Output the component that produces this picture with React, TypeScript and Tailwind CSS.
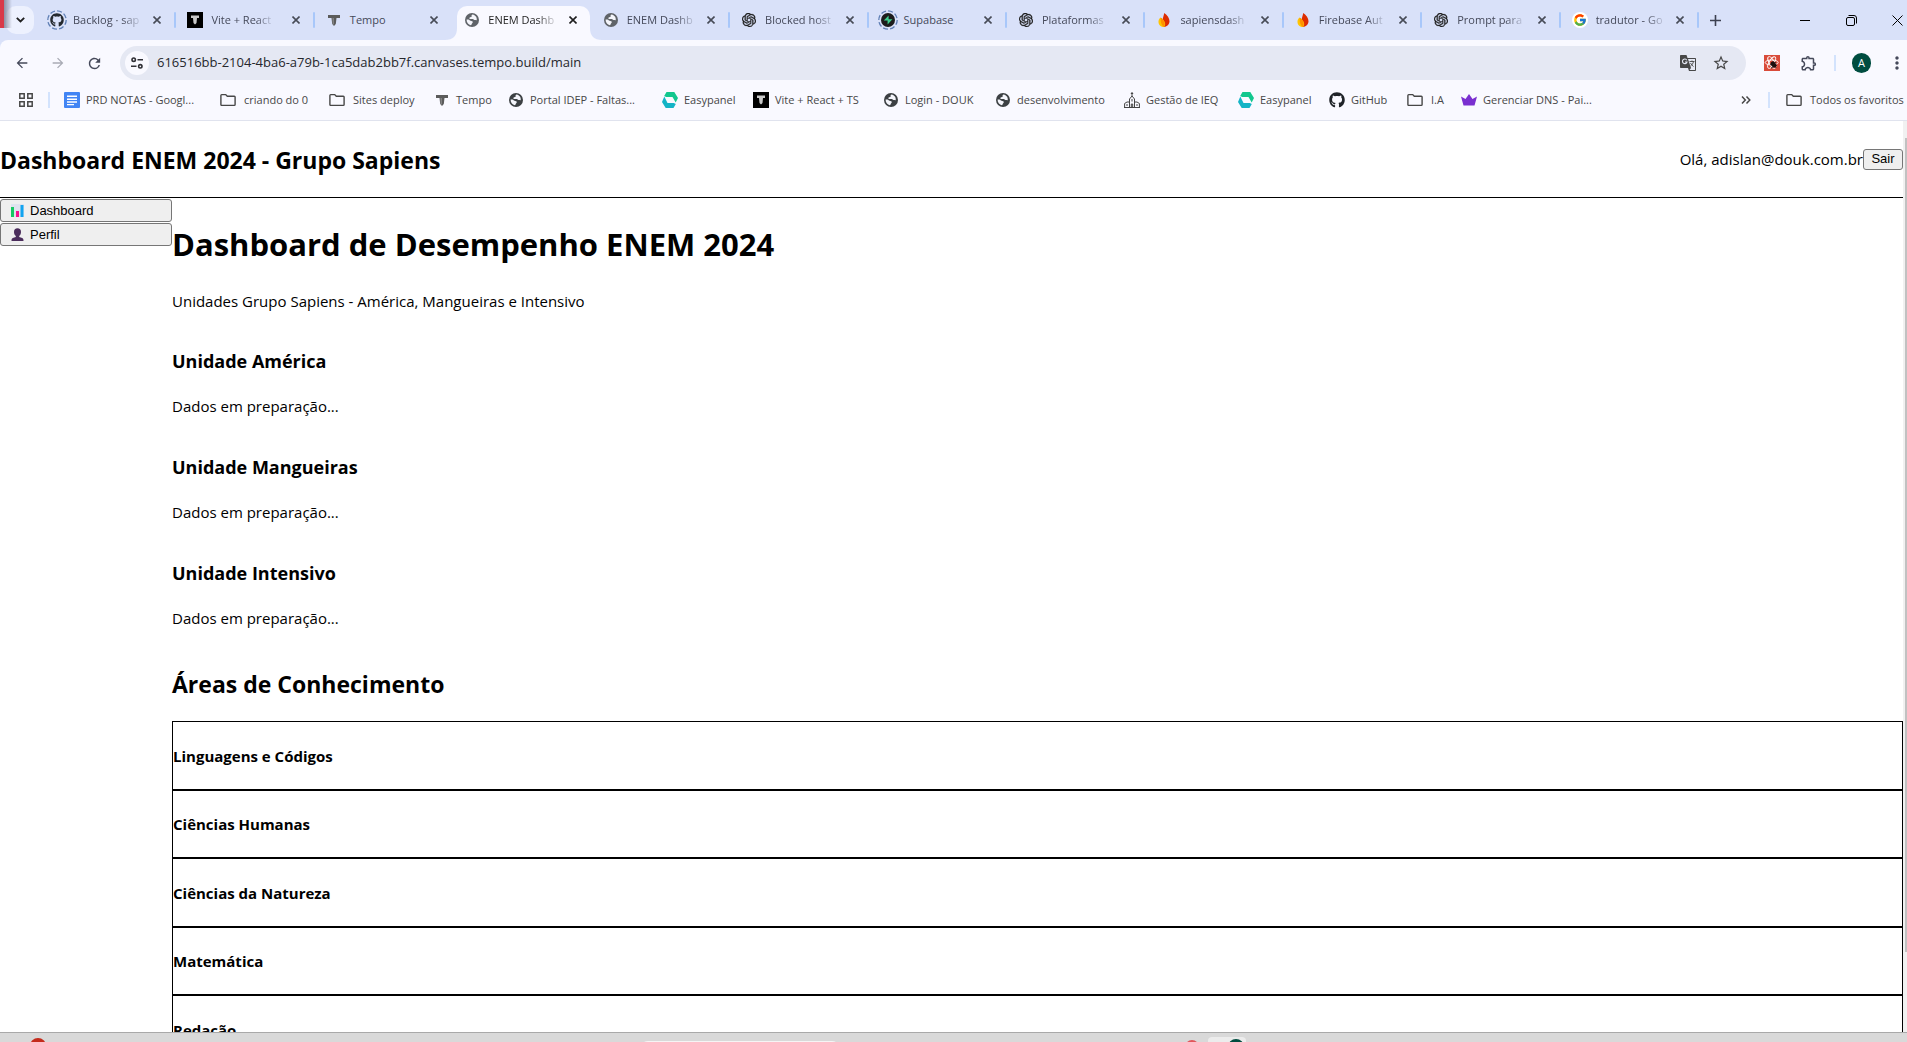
import React from "react";
import { FaGithub } from "react-icons/fa";
import { FcGoogle } from "react-icons/fc";
import { SiOpenai } from "react-icons/si";
import { MdArrowBack, MdArrowForward, MdRefresh, MdStarBorder, MdMoreVert, MdOutlineExtension } from "react-icons/md";

function Globe({ color = "#5f6368" }: { color?: string }) {
  return (
    <svg width="16" height="16" viewBox="0 0 16 16" aria-hidden="true">
      <circle cx="8" cy="8" r="7" fill={color} />
      <path
        d="M8.600 2.600c-.9.200-1.200 1-1 1.700.1.700-.6.900-1.300.9-.8.100-1.200.7-.9 1.400.3.600 1 .5 1.800.5h1.600c.8.100 1 .8 1.600.9.700.1 1.300.1 2.300.2.500-2.600-1.300-4.900-4.100-5.600z"
        fill="#f4f5fb"
      />
      <path d="M2.600 7.600c1.300 0 2.300 0 3.300.8.800.6 2.100.3 2.700 1 .5.700 0 1.500-.6 2-.5.500-.4 1.300-1.100 1.900-2.600-.5-4.500-2.800-4.300-5.700z" fill="#f4f5fb" />
    </svg>
  );
}

function TempoMark() {
  return (
    <svg width="16" height="16" viewBox="0 0 16 16" aria-hidden="true">
      <path d="M2 3h12v3h-3.500L9.800 12 8 14l-1.800-2L5.500 6H2z" fill="#5b5b5b" />
      <path d="M6.500 6h1.300v7L6.700 11.600z" fill="#8a8a8a" />
    </svg>
  );
}

function ViteTile() {
  return (
    <svg width="16" height="16" viewBox="0 0 16 16" aria-hidden="true">
      <rect width="16" height="16" fill="#000" />
      <path d="M4 3.500h8v2.500h-2L9.500 11 8 12.500 6.500 11 6 6H4z" fill="#c9c9c9" />
    </svg>
  );
}

function Ringed({ children }: { children: React.ReactNode }) {
  return (
    <span className="relative flex size-4 items-center justify-center">
      <svg className="absolute -top-0.5 -left-0.5" width="20" height="20" viewBox="0 0 20 20" aria-hidden="true">
        <circle cx="10" cy="10" r="9.200" fill="none" stroke="#5f7fb5" strokeWidth="1.300" strokeDasharray="5 2.200" />
      </svg>
      {children}
    </span>
  );
}

function Supabase() {
  return (
    <svg className="relative" width="14" height="14" viewBox="0 0 14 14" aria-hidden="true">
      <circle cx="7" cy="7" r="7" fill="#1c1c1c" />
      <path d="M7.600 2.500 2.800 7.600h3.800v3.800l4.800-5.100H7.600z" fill="#3ecf8e" />
    </svg>
  );
}

function Firebase() {
  return (
    <svg width="16" height="16" viewBox="0 0 16 16" aria-hidden="true">
      <path d="M8.300 1c3 2.300 5.200 5 5.200 8.300 0 3-2.200 5.400-5.300 5.700-1.500-2-2-4-1.700-6C6.700 6.500 7.500 4 8.300 1z" fill="#dd2c00" />
      <path d="M4.300 5.500C3 7 2.300 8.500 2.500 10.200 2.700 13 5 15 8.200 15c2-2.500 1.200-6.500-3.900-9.500z" fill="#ffc400" />
      <path d="M4.800 5.800C7.600 7.200 9.700 10.500 8.200 15c-2.400-1-3.900-4.500-3.400-9.200z" fill="#ff9100" />
    </svg>
  );
}

function GoogleDisc() {
  return (
    <span className="flex size-4 items-center justify-center rounded-full bg-white">
      <FcGoogle size={14} />
    </span>
  );
}

function Docs() {
  return (
    <svg width="16" height="16" viewBox="0 0 16 16" aria-hidden="true">
      <rect width="16" height="16" rx="1" fill="#4285f4" />
      <path d="M3 3.500h10v1.500H3zM3 6.500h10V8H3zM3 9.300h10v1.500H3zM3 12h7v1.300H3z" fill="#fff" />
    </svg>
  );
}

function Folder() {
  return (
    <svg width="16" height="16" viewBox="0 0 16 16" fill="none" stroke="#474747" strokeWidth="1.400" aria-hidden="true">
      <path d="M.9 3.400c0-.5.300-.8.800-.8h4l1.600 1.700h7c.5 0 .8.300.8.800v7.500c0 .5-.3.800-.8.800H1.700c-.5 0-.8-.3-.8-.8z" />
    </svg>
  );
}

function Easypanel() {
  return (
    <svg width="16" height="16" viewBox="0 0 16 16" aria-hidden="true">
      <path d="M4.500 0h7.800L16 6l-2.300 4.500L10.500 5H4.200L2.200 4z" fill="#12c78e" />
      <path d="M11.500 16H3.700L0 10l2.300-5.500L5.500 11h6.300l2 1z" fill="#14b4c6" />
    </svg>
  );
}

function Church() {
  return (
    <svg width="16" height="16" viewBox="0 0 16 16" fill="none" stroke="#444" strokeWidth="1" aria-hidden="true">
      <path d="M8 0v4M6.800 1.500h2.400M5.500 15.500V7L8 4l2.500 3v8.500M.6 15.500v-4L3 10h2.500M15.400 15.500v-4L13 10h-2.500M0 15.500h16M3 12v2M13 12v2M7.300 15v-3h1.400v3M8 7v2.500" />
    </svg>
  );
}

function Crown() {
  return (
    <svg width="16" height="16" viewBox="0 0 16 16" aria-hidden="true">
      <path d="M0 4.500 4.500 7 8 2l3.500 5L16 4.500 13.500 13.500h-11z" fill="#7a2fd0" />
    </svg>
  );
}

function Translate() {
  return (
    <svg width="16" height="16" viewBox="0 0 16 16" fill="none" aria-hidden="true">
      <path d="M1 0h5.500l1 3H15c.6 0 1 .4 1 1v11c0 .6-.4 1-1 1H9l-1-3H1c-.6 0-1-.4-1-1V1c0-.6.400-1 1-1z" fill="#474747" />
      <path d="M8 4h7v11H9.500l1.500-2z" fill="#e5e8f3" />
      <path d="M6.800 5.200A2.300 2.300 0 1 0 7 7H5" stroke="#e5e8f3" strokeWidth="1.100" />
      <path d="M9.500 6.500h5M12 5.500v1M13.500 6.500c-.4 2-1.500 3.500-3 4.500M10.500 8c.7 1.500 1.700 2.500 3 3.500" stroke="#474747" strokeWidth=".9" />
    </svg>
  );
}

function ReactExtension() {
  return (
    <svg width="16" height="16" viewBox="0 0 16 16" fill="none" aria-hidden="true">
      <rect width="16" height="16" fill="#d94b3a" />
      <g stroke="#fff" strokeWidth=".9">
        <ellipse cx="7.700" cy="7.500" rx="6.500" ry="2.500" />
        <ellipse cx="7.700" cy="7.500" rx="6.500" ry="2.500" transform="rotate(60 7.700 7.500)" />
        <ellipse cx="7.700" cy="7.500" rx="6.500" ry="2.500" transform="rotate(120 7.700 7.500)" />
      </g>
      <ellipse cx="9.500" cy="9.500" rx="2.300" ry="3.300" transform="rotate(-40 9.500 9.500)" fill="#1c0f0d" />
      <path d="M6 10l6-3M7 13l6-3M9 6l3 7" stroke="#1c0f0d" strokeWidth=".9" />
    </svg>
  );
}

function SiteSettings() {
  return (
    <svg width="14" height="14" viewBox="0 0 14 14" fill="none" stroke="#303036" strokeWidth="1.600" aria-hidden="true">
      <circle cx="3.700" cy="3.700" r="1.700" />
      <path d="M7.500 3.700H13M1 10.300h5.500" />
      <circle cx="10.300" cy="10.300" r="1.700" />
    </svg>
  );
}

function AppsGrid() {
  return (
    <svg width="14" height="14" viewBox="0 0 14 14" fill="none" stroke="#474747" strokeWidth="1.500" aria-hidden="true">
      <path d="M.8.800h4.400v4.400H.8zM8.800.8h4.400v4.400H8.800zM.8 8.800h4.400v4.400H.8zM8.800 8.800h4.400v4.400H8.800z" />
    </svg>
  );
}

function Cross({ color = "#474b57" }: { color?: string }) {
  return (
    <svg width="8" height="8" viewBox="0 0 8 8" stroke={color} strokeWidth="1.600" aria-hidden="true">
      <path d="M.5.500l7 7M7.500.5l-7 7" />
    </svg>
  );
}

function BarChart() {
  return (
    <svg width="13" height="13" viewBox="0 0 13 13" aria-hidden="true">
      <rect width="13" height="13" fill="#dfe3ee" />
      <rect y="3" width="3" height="10" fill="#17c964" />
      <rect x="5" y="7" width="3" height="6" fill="#f5128e" />
      <rect x="9.500" y="1" width="3" height="12" fill="#11a4f0" />
    </svg>
  );
}

function Bust() {
  return (
    <svg width="13" height="13" viewBox="0 0 13 13" fill="#4b2d5c" aria-hidden="true">
      <path d="M6.500.3c2.200 0 3.500 1.400 3.500 3.600 0 1.800-.8 3.200-1.800 4v1l3 1.200c1 .4 1.300 1.300 1.300 2.900H.5c0-1.600.3-2.500 1.300-2.900l3-1.200v-1C3.800 7.100 3 5.700 3 3.900 3 1.700 4.300.3 6.500.3z" />
    </svg>
  );
}

const openAi = <SiOpenai size={14} color="#1f1f1f" stroke="#1f1f1f" strokeWidth={0.6} />;

const tabs = [
  { title: "Backlog · sap", icon: <Ringed><FaGithub size={14} color="#24292f" className="relative" /></Ringed>, divider: true },
  { title: "Vite + React", icon: <ViteTile />, divider: true },
  { title: "Tempo", icon: <TempoMark /> },
  { title: "ENEM Dashb", icon: <Globe />, active: true },
  { title: "ENEM Dashb", icon: <Globe />, divider: true },
  { title: "Blocked host", icon: openAi, divider: true },
  { title: "Supabase", icon: <Ringed><Supabase /></Ringed>, divider: true },
  { title: "Plataformas", icon: openAi, divider: true },
  { title: "sapiensdash", icon: <Firebase />, divider: true },
  { title: "Firebase Aut", icon: <Firebase />, divider: true },
  { title: "Prompt para", icon: openAi, divider: true },
  { title: "tradutor - Go", icon: <GoogleDisc />, divider: true },
];

const bookmarks = [
  { label: "PRD NOTAS - Googl...", icon: <Docs />, width: "w-[156px]", gap: "gap-1.5" },
  { label: "criando do 0", icon: <Folder />, width: "w-[109px]", gap: "gap-2" },
  { label: "Sites deploy", icon: <Folder />, width: "w-[105px]", gap: "gap-2" },
  { label: "Tempo", icon: <TempoMark />, width: "w-[74px]", gap: "gap-1.5" },
  { label: "Portal IDEP - Faltas...", icon: <Globe color="#3c4043" />, width: "w-[154px]", gap: "gap-1.5" },
  { label: "Easypanel", icon: <Easypanel />, width: "w-[91px]", gap: "gap-1.5" },
  { label: "Vite + React + TS", icon: <ViteTile />, width: "w-[130px]", gap: "gap-1.5" },
  { label: "Login - DOUK", icon: <Globe color="#3c4043" />, width: "w-[112px]", gap: "gap-1.5" },
  { label: "desenvolvimento", icon: <Globe color="#3c4043" />, width: "w-[129px]", gap: "gap-1.5" },
  { label: "Gestão de IEQ", icon: <Church />, width: "w-[114px]", gap: "gap-1.5" },
  { label: "Easypanel", icon: <Easypanel />, width: "w-[91px]", gap: "gap-1.5" },
  { label: "GitHub", icon: <FaGithub size={16} color="#1f2328" />, width: "w-[78px]", gap: "gap-1.5" },
  { label: "I.A", icon: <Folder />, width: "w-[54px]", gap: "gap-2" },
  { label: "Gerenciar DNS - Pai...", icon: <Crown />, width: "w-[140px]", gap: "gap-1.5" },
];

function Tab({ title, icon, active, divider }: { title: string; icon: React.ReactNode; active?: boolean; divider?: boolean }) {
  return (
    <div className="relative flex h-full min-w-0 flex-1 items-center pl-[11px]">
      {active && (
        <svg className="absolute bottom-0 -left-2 h-[34px] w-[calc(100%+20px)]" aria-hidden="true">
          <rect x="12" width="133" height="34" rx="10" fill="#f9f9ff" />
          <path d="M0 34c8 0 12-4 12-12h133c0 8 4 12 12 12z" fill="#f9f9ff" />
        </svg>
      )}
      <button className="relative flex min-w-0 flex-1 items-center gap-2">
        <span className="flex size-4 shrink-0 items-center justify-center">{icon}</span>
        <span
          className={`min-w-0 pr-1 text-left text-[11px] leading-4 whitespace-nowrap ${
            title.length > 9 ? "[mask-image:linear-gradient(to_right,#000_70%,transparent)]" : ""
          } ${active ? "text-[#1f1f1f]" : "text-[#45495a]"}`}
        >
          {title}
        </span>
      </button>
      <button aria-label={`Fechar ${title}`} className="relative mr-[11px] flex size-4 shrink-0 items-center justify-center">
        <Cross color={active ? "#1f1f1f" : undefined} />
      </button>
      {divider && <span className="absolute top-3 right-0 h-4 w-0.5 rounded-full bg-[#a8c7fa]" />}
    </div>
  );
}

function TabStrip() {
  return (
    <div className="flex h-10 shrink-0 bg-[#d9e1f9]">
      <div className="relative w-[38px] shrink-0">
        <button aria-label="Pesquisar guias" className="absolute top-1.5 left-1.5 flex size-7 items-center justify-center rounded-[10px] bg-[#edf1fe]">
          <svg width="9" height="6" viewBox="0 0 9 6" fill="none" stroke="#1f1f1f" strokeWidth="1.800" aria-hidden="true">
            <path d="M.8.800l3.700 3.700L8.200.8" />
          </svg>
        </button>
        <span className="absolute top-0 left-0 h-7 w-1 bg-[#d93a49]" />
        <span className="absolute top-0 left-1 h-7 w-2 bg-linear-to-r from-[#8f93a5] to-transparent" />
      </div>
      <div className="flex min-w-0 flex-1">
        {tabs.map((tab, i) => (
          <Tab key={i} {...tab} />
        ))}
      </div>
      <div className="flex w-52 shrink-0 items-center pl-2.5">
        <button aria-label="Nova guia" className="flex size-3 items-center justify-center">
          <svg width="11" height="11" viewBox="0 0 11 11" stroke="#3c4050" strokeWidth="1.600" aria-hidden="true">
            <path d="M5.500 0v11M0 5.500h11" />
          </svg>
        </button>
        <div className="flex flex-1 items-center justify-end gap-[35px] pr-1">
          <button aria-label="Minimizar">
            <svg width="11" height="11" viewBox="0 0 11 11" stroke="#000" aria-hidden="true"><path d="M0 5.500h10" /></svg>
          </button>
          <button aria-label="Restaurar">
            <svg width="11" height="11" viewBox="0 0 11 11" fill="none" stroke="#000" aria-hidden="true">
              <rect x=".5" y="2.500" width="8" height="8" rx="1.500" />
              <path d="M2.500.5h5.500a2.500 2.500 0 0 1 2.500 2.500v5.500" />
            </svg>
          </button>
          <button aria-label="Fechar">
            <svg width="11" height="11" viewBox="0 0 11 11" stroke="#000" aria-hidden="true"><path d="M.5.500l10 10M10.500.5l-10 10" /></svg>
          </button>
        </div>
      </div>
    </div>
  );
}

function AddressRow() {
  return (
    <div className="shrink-0 bg-[#d9e1f9]">
      <div className="flex h-10 items-end rounded-tl-lg bg-[#f9f9ff]">
        <div className="flex h-[34px] w-[120px] shrink-0 items-center gap-5 pl-3.5 text-[#45495a]">
          <button aria-label="Voltar"><MdArrowBack size={16} /></button>
          <button aria-label="Avançar" className="text-[#a9abb5]"><MdArrowForward size={16} /></button>
          <button aria-label="Recarregar"><MdRefresh size={17} /></button>
        </div>
        <div className="flex h-[34px] min-w-0 flex-1 items-center rounded-full bg-[#e5e8f3] pr-4 pl-[5px]">
          <button aria-label="Informações do site" className="flex size-6 shrink-0 items-center justify-center rounded-full bg-[#f9f9ff]">
            <SiteSettings />
          </button>
          <input
            aria-label="Endereço"
            defaultValue="616516bb-2104-4ba6-a79b-1ca5dab2bb7f.canvases.tempo.build/main"
            className="ml-2 min-w-0 flex-1 bg-transparent text-[13px] text-[#26272c] outline-none"
          />
          <button aria-label="Traduzir"><Translate /></button>
          <button aria-label="Favoritar" className="ml-4 text-[#474747]"><MdStarBorder size={18} /></button>
        </div>
        <div className="flex h-[34px] w-[161px] shrink-0 items-center pl-[18px]">
          <button aria-label="React"><ReactExtension /></button>
          <button aria-label="Extensões" className="ml-5 text-[#45495a]"><MdOutlineExtension size={18} /></button>
          <span className="ml-4 h-4 w-0.5 bg-[#d3e3fd]" />
          <button aria-label="Perfil do navegador" className="ml-4 flex size-5 items-center justify-center rounded-full bg-[#004d40] text-[11px] text-white">A</button>
          <button aria-label="Menu" className="ml-4 text-[#45495a]"><MdMoreVert size={20} /></button>
        </div>
      </div>
    </div>
  );
}

function BookmarkBar() {
  return (
    <nav aria-label="Favoritos" className="flex h-[41px] shrink-0 items-center overflow-hidden border-b border-[#e0e3ee] text-[11px] whitespace-nowrap text-[#474747]">
      <button aria-label="Aplicativos" className="ml-[19px] shrink-0"><AppsGrid /></button>
      <span className="mr-3.5 ml-[15px] h-4 w-0.5 shrink-0 bg-[#d3e3fd]" />
      {bookmarks.map((b, i) => (
        <a key={i} href="#" className={`flex shrink-0 items-center ${b.width} ${b.gap}`}>
          <span className="flex size-4 shrink-0 items-center justify-center">{b.icon}</span>
          {b.label}
        </a>
      ))}
      <button aria-label="Mais favoritos" className="ml-auto shrink-0">
        <svg width="10" height="8" viewBox="0 0 10 8" fill="none" stroke="#474747" strokeWidth="1.500" aria-hidden="true">
          <path d="M1 .6 4.300 4 1 7.400M5.500.6 8.800 4 5.500 7.400" />
        </svg>
      </button>
      <span className="mr-4 ml-[17px] h-4 w-0.5 shrink-0 bg-[#d3e3fd]" />
      <a href="#" className="flex w-[121px] shrink-0 items-center gap-2"><Folder />Todos os favoritos</a>
    </nav>
  );
}

const nativeButton = "rounded-[3px] border border-[#767676] bg-[#efefef] font-['Liberation_Sans',Arial,sans-serif] text-[13px] text-black";
const units = ["Unidade América", "Unidade Mangueiras", "Unidade Intensivo"];
const areas = ["Linguagens e Códigos", "Ciências Humanas", "Ciências da Natureza", "Matemática", "Redação"];

function Page() {
  return (
    <div className="flex min-h-0 flex-1 overflow-hidden bg-white text-[15px] leading-5 text-black">
      <div className="min-w-0 flex-1">
        <header className="flex h-[77px] items-center justify-between border-b border-black">
          <h2 className="pt-0.5 text-[23px] leading-8 font-bold">Dashboard ENEM 2024 - Grupo Sapiens</h2>
          <div className="flex items-start">
            <span>Olá, adislan@douk.com.br</span>
            <button className={`h-[21px] w-10 leading-4 ${nativeButton}`}>Sair</button>
          </div>
        </header>
        <div className="flex">
          <nav aria-label="Principal" className="w-43 shrink-0">
            <ul>
              <li className="pt-px">
                <button className={`flex h-[23px] w-full items-center gap-1.5 pl-2.5 ${nativeButton}`}><BarChart />Dashboard</button>
              </li>
              <li className="pt-px">
                <button className={`flex h-[23px] w-full items-center gap-1.5 pl-2.5 ${nativeButton}`}><Bust />Perfil</button>
              </li>
            </ul>
          </nav>
          <main className="min-w-0 flex-1">
            <h1 className="mt-6 text-[31px] leading-11 font-bold">Dashboard de Desempenho ENEM 2024</h1>
            <p className="mt-[25px]">Unidades Grupo Sapiens - América, Mangueiras e Intensivo</p>
            <div className="mt-[38px] flex flex-col gap-[39px]">
              {units.map((u) => (
                <section key={u}>
                  <h3 className="text-[18px] leading-6 font-bold">{u}</h3>
                  <p className="mt-[23px]">Dados em preparação...</p>
                </section>
              ))}
            </div>
            <h2 className="mt-10 text-[23px] leading-8 font-bold">Áreas de Conhecimento</h2>
            <div className="mt-[21px]">
              {areas.map((a) => (
                <div key={a} className="flex h-[69px] items-center border border-black even:h-[68px]">
                  <h4 className="font-bold">{a}</h4>
                </div>
              ))}
            </div>
          </main>
        </div>
      </div>
      <div className="w-1 shrink-0 bg-[#f1f1f1] pt-[17px] pl-0.5" aria-hidden="true">
        <div className="h-[91%] bg-[#c1c1c1]" />
      </div>
    </div>
  );
}

function Taskbar() {
  return (
    <div className="relative h-2.5 shrink-0 overflow-hidden border-t border-[#a9a9a9] bg-[#d9d9d9]" aria-hidden="true">
      <span className="absolute top-[5px] left-[30px] size-4 rounded-full bg-[#c42b1c]" />
      <span className="absolute top-2 left-[640px] h-8 w-[200px] rounded-lg bg-[#f5f5f5]" />
      <span className="absolute top-[7px] left-[1185px] size-3.5 rounded-full bg-[#e0565b]" />
      <span className="absolute top-1 left-[1208px] h-10 w-[38px] rounded bg-[#ececec]" />
      <span className="absolute top-1.5 left-[1228px] size-4 rounded-full bg-[#004d40]" />
    </div>
  );
}

export default function App() {
  return (
    <div className="flex h-screen flex-col overflow-hidden bg-[#f9f9ff] font-['Open_Sans','Noto_Sans',sans-serif]">
      <TabStrip />
      <AddressRow />
      <BookmarkBar />
      <Page />
      <Taskbar />
    </div>
  );
}
